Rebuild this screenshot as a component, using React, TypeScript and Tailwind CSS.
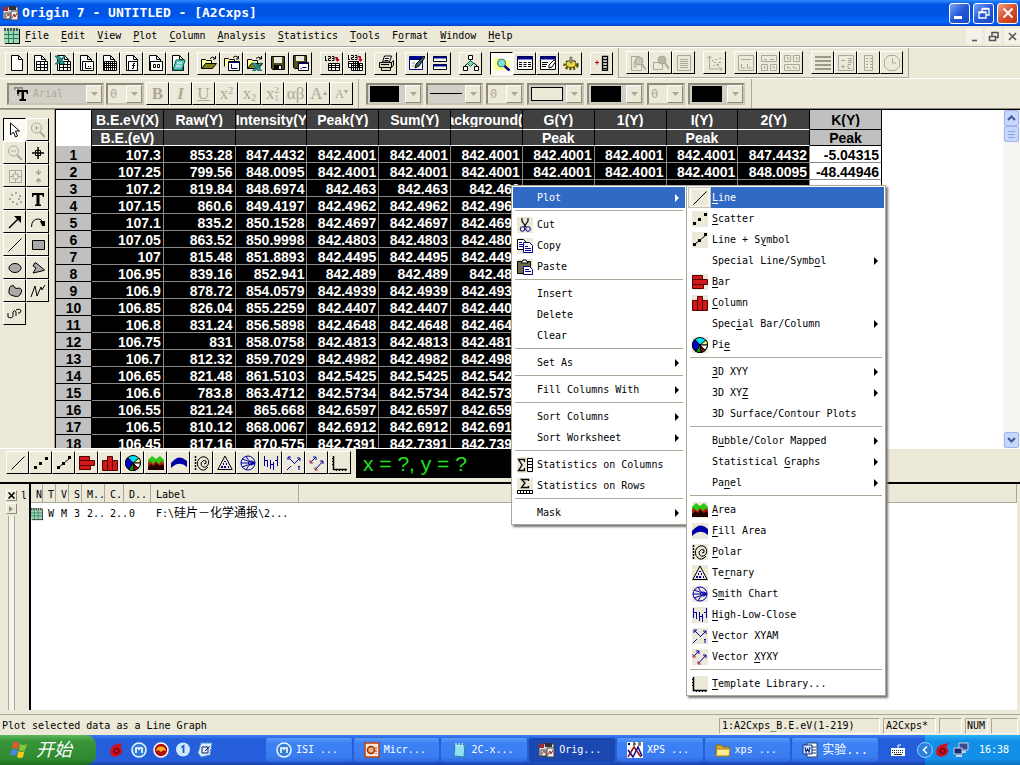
import type { ReactNode } from "react";

const page = <path d="M2.5 .5h7l4 4v11h-11zM9.5 .5v4h4" fill="#fff" stroke="#000" />;

const icons: Record<string, ReactNode> = {
  // file toolbar
  new: page,
  sheet: (
    <>
      {page}
      <path d="M4.5 6.5h11v9h-11z" fill="#fff" stroke="#000" />
      <path d="M4 9.5h12M4 12.5h12M8.5 6v10M12.5 6v10" stroke="#000" />
    </>
  ),
  excel: (
    <>
      {page}
      <path d="M4.5 6.5h11v9h-11z" fill="#fff" stroke="#000" />
      <path d="M4 9.5h12M4 12.5h12M8.5 6v10M12.5 6v10" stroke="#000" />
      <path d="M0 1h4l6 8H6zM9 1h2L3 9H0z" fill="#2a9c9c" stroke="#0f4f4f" strokeWidth=".6" />
    </>
  ),
  graph: (
    <>
      {page}
      <path d="M4.5 6.5h11v9h-11z" fill="#fff" stroke="#000" />
      <path d="M7.5 8v5.5h6M10 11.5h1M12 11.5h1" stroke="#000" fill="none" />
    </>
  ),
  matrix: (
    <>
      {page}
      <path d="M3.5 6.5h12v9h-12z" fill="#fff" stroke="#000" />
      <path d="M3 8.5h13M3 10.5h13M3 12.5h13M5.5 6v10M7.5 6v10M9.5 6v10M11.5 6v10M13.5 6v10" stroke="#000" />
    </>
  ),
  func: (
    <>
      {page}
      <path d="M4.5 6.5h9v9h-9z" fill="#fff" stroke="#000" />
      <path d="M11 8.5h-1.5v5H8M8 10.5h3" stroke="#000" fill="none" />
    </>
  ),
  layout: (
    <>
      {page}
      <path d="M3.5 6.5h12v9h-12zM6.5 9.5h2v3h-2zM10.5 9.5h2v3h-2z" fill="#fff" stroke="#000" />
    </>
  ),
  notes: (
    <>
      {page}
      <path d="M6 5h9l-3 10H3z" fill="#5fc4c4" stroke="#064" />
      <path d="M7 8h5M6 11h5" stroke="#fff" />
    </>
  ),
  open: (
    <>
      <path d="M.5 13.5v-9h4l1 1h5v3" fill="#ff9" stroke="#000" />
      <path d="M.5 13.5l4-5h11l-4 5z" fill="#807f20" stroke="#000" />
      <path d="M9 3.5q3-3 5 0M14.5 1v3H12" stroke="#000" fill="none" />
    </>
  ),
  openGraph: (
    <>
      <path d="M.5 11.5v-8h4l1 1h5v3" fill="#ff9" stroke="#000" />
      <path d="M9 2.5q3-3 5 0M14.5 1v3H12" stroke="#000" fill="none" />
      <path d="M4.5 6.5h11v9h-11z" fill="#fff" stroke="#000" />
      <path d="M5 7.5h10" stroke="#008" />
      <path d="M7.5 9v4.5h6" stroke="#008" fill="none" />
    </>
  ),
  openExcel: (
    <>
      <path d="M.5 13.5v-9h4l1 1h5v3" fill="#ff9" stroke="#000" />
      <path d="M.5 13.5l4-5h11l-4 5z" fill="#807f20" stroke="#000" />
      <path d="M9 3.5q3-3 5 0M14.5 1v3H12" stroke="#000" fill="none" />
      <path d="M5 8h4l6 8h-4zM13 8h2l-7 8H5z" fill="#2a9c9c" stroke="#0f4f4f" strokeWidth=".6" />
    </>
  ),
  save: (
    <>
      <path d="M1.5 1.5h13v13h-12l-1-1z" fill="#4d4d20" stroke="#000" />
      <path d="M4 2h8v6H4z" fill="#ece9d8" />
      <path d="M4 10h8v5H4z" fill="#000" />
      <path d="M9 11h2v3H9z" fill="#fff" />
    </>
  ),
  saveGraph: (
    <>
      <path d="M.5 .5h13v13h-12l-1-1z" fill="#4d4d20" stroke="#000" />
      <path d="M3 1h8v5H3z" fill="#ece9d8" />
      <path d="M5.5 7.5h10v8h-10z" fill="#fff" stroke="#000" />
      <path d="M6 8.5h9" stroke="#008" />
      <path d="M7.5 13.5h1l1-1h4" stroke="#008" fill="none" />
    </>
  ),
  import: (
    <>
      <path d="M1.5 1v4M1 5.5h2M4 1.5h2.5v2H4.5v2H7M8 1.5h2v4H8M8 3.5h2" stroke="#000" fill="none" />
      <path d="M11 2.500h2.500V6M12 4.500h3l-1.500 2z" stroke="#c00020" fill="#c00020" />
      <path d="M4.5 8.5h11v7h-11z" fill="#fff" stroke="#000" />
      <path d="M4 10.5h12M4 12.5h12M7.5 8v8M11.5 8v8" stroke="#000" />
    </>
  ),
  importAll: (
    <>
      <path d="M1.5 0v4M1 4.5h2M4 .5h2.5v2H4.5v2H7M8 .5h2v4H8M8 2.5h2" stroke="#000" fill="none" />
      <path d="M11 1.500h2.500V5M12 4.500h3l-1.500 2z" stroke="#c00020" fill="#c00020" />
      <path d="M1.5 6.5h10v6h-10zM4.5 8.5h11v7h-11z" fill="#fff" stroke="#000" />
      <path d="M1 8.5h14M4 10.5h12M4 12.5h12M6.5 6v10M8.5 6v10M10.5 6v10M12.5 8v8" stroke="#000" />
    </>
  ),
  print: (
    <>
      <path d="M4.5 7l2-6h7l-2 6z" fill="#fff" stroke="#000" />
      <path d="M1.5 7.5h12v5h-12zM13.5 7.5l2-2v5l-2 2zM3.5 12.5h9v3h-9z" fill="#ddd8b8" stroke="#000" />
      <path d="M7 3.5h4M6.5 5.5h4M3 9.5h8" stroke="#000" />
    </>
  ),
  refresh: (
    <>
      <path d="M.5 1.5h13v13H.5z" fill="#fff" stroke="#008" />
      <path d="M1 3.5h12" stroke="#008" strokeWidth="3" />
      <path d="M15 1L7 9l-1 4 4-2 6-9z" fill="#306c6c" stroke="#000" />
      <path d="M3 8h3M3 11h2" stroke="#888" />
    </>
  ),
  duplicate: (
    <>
      <path d="M1.5 1.5h13v5h-13zM1.5 9.5h13v5h-13z" fill="#fff" stroke="#000" />
      <path d="M1 2.5h14M1 10.5h14" stroke="#008" strokeWidth="2" />
    </>
  ),
  project: (
    <>
      <path d="M5.5 .5h4v4h-4z" fill="#fff" stroke="#000" />
      <path d="M7.5 5v2M2.5 12v-2l3-2M13.5 12v-2l-3-2" stroke="#000" fill="none" />
      <path d="M7.5 5.5l3 3-3 3-3-3z" fill="#7fd0c0" stroke="#064" />
      <path d="M.5 11.5h4v4h-4zM11.500 11.5h4v4h-4z" fill="#fff" stroke="#000" />
    </>
  ),
  explorer: (
    <>
      <path d="M0 3h6l2 2h8v10H0z" fill="#ffff90" />
      <circle cx="7.500" cy="8" r="4" fill="#7fe0d0" stroke="#3a7a70" />
      <path d="M10.500 11l5 4.500" stroke="#008" strokeWidth="2.500" />
    </>
  ),
  results: (
    <>
      <path d="M.5 1.5h15v13H.5z" fill="#fff" stroke="#000" />
      <path d="M0 3h16" stroke="#008" strokeWidth="3" />
      <path d="M2 7.5h12M2 9.5h12M2 11.5h12" stroke="#000" strokeDasharray="3 1.500" />
    </>
  ),
  script: (
    <>
      <path d="M.5 1.5h15v13H.5z" fill="#fff" stroke="#000" />
      <path d="M0 3h16" stroke="#008" strokeWidth="3" />
      <path d="M2 7.5h6M2 9.5h5M2 11.5h4" stroke="#000" />
      <path d="M14 5l-5 5v3l3-1 4-6z" fill="#fff" stroke="#000" />
    </>
  ),
  code: (
    <>
      <ellipse cx="8" cy="10" rx="6" ry="3.500" fill="#e8d850" stroke="#5a5000" strokeWidth="3.500" strokeDasharray="2 1.500" />
      <ellipse cx="8" cy="9" rx="5" ry="3.500" fill="#e8d850" stroke="#5a5000" />
      <path d="M7 2h2v6H7z" fill="#aaa" stroke="#444" strokeWidth=".6" />
    </>
  ),
  addColumn: (
    <>
      <path d="M1 7.5h4M3 5.500v4" stroke="#c00020" />
      <path d="M8.5 1.5h5v14h-5zM8 4.5h6M8 7.5h6M8 10.5h6M8 13.5h6" fill="#fff" stroke="#000" strokeWidth="1.300" />
    </>
  ),
  zoomPage: (
    <>
      <path d="M1.5 1.5h8l2 2v12h-10zM4 6v7M6 9v4" fill="none" stroke="#aca899" />
      <circle cx="9" cy="6" r="4" fill="#c8c5b4" stroke="#aca899" />
      <path d="M12 9l4 6" stroke="#aca899" strokeWidth="2" />
    </>
  ),
  zoomOut: (
    <>
      <path d="M.5 7.5h9v7h-9z" fill="none" stroke="#aca899" />
      <circle cx="9" cy="5" r="4" fill="#b8b5a4" stroke="#aca899" />
      <path d="M12 8l4 6" stroke="#aca899" strokeWidth="2" />
    </>
  ),
  wholePage: <path d="M1.5 .5h13v15h-13zM4 4.5h8M4 6.5h8M4 8.5h8M4 10.5h8M4 12.5h8" fill="none" stroke="#aca899" />,
  rescale: (
    <path
      d="M2.5 1v13H15M0 3.5L2.5 1 5 3.5M12.5 12l3 2.500-3 2M6 10.5h2M7 7.5h2M9 9.5h3M8 4.5h2M12 3.5h2M11 7.5h3M6 5v2M11 10v2"
      fill="none"
      stroke="#aca899"
    />
  ),
  layer1: <path d="M.5 .5h15v15H.5zM3 4.500h10M3.500 9v4H7M9.5 9v4H13" fill="none" stroke="#aca899" />,
  layer4: <path d="M.5 .5h15v6H.5zM.5 9.5h6v6h-6zM9.5 9.5h6v6h-6zM3 4.5h3M9 4.5h4M3.5 11v2H5M12.5 11v2H14" fill="none" stroke="#aca899" />,
  layers: <path d="M.5 .5h6v6h-6zM9.5 .5h6v6h-6zM.5 9.5h15v6H.5zM3.5 2v2H5M12.5 2v2H14M3.5 11v2H7M9.5 11v2H13" fill="none" stroke="#aca899" />,
  lines: <path d="M0 2h16M0 6h16M0 10h16M0 14h16" stroke="#9c998a" strokeWidth="2" />,
  legend: <path d="M.5 .5h15v15H.5zM3 5.5h4M3 11.5h4M5 9.5v4M10 3.5h3v4h-3M10 5.5h3M13 9.5h-3v4h3" fill="none" stroke="#aca899" />,
  scale: <path d="M3.5 .5h8v15h-8zM5 3.5h2M5 6.5h2M5 9.5h2M5 12.5h2M9 3.5h2M9 6.5h2M9 9.5h2M9 12.5h2" fill="none" stroke="#aca899" />,
  clock: <path d="M5 .5h6l4.500 4v7l-4.500 4H5l-4.500-4v-7zM8.500 3v5H12" fill="none" stroke="#aca899" />,

  // tools
  pointer: <path d="M3.5 1v12l3-3 2 5 2-1-2-5h4z" fill="#fff" stroke="#000" />,
  magnify: (
    <>
      <circle cx="6.500" cy="6" r="5" fill="none" stroke="#aca899" />
      <path d="M10 10l5 5" stroke="#aca899" strokeWidth="2" />
      <path d="M4 6h5M6.500 3.500v5" stroke="#aca899" />
    </>
  ),
  shrink: (
    <>
      <circle cx="6.500" cy="6" r="5" fill="none" stroke="#aca899" />
      <path d="M10 10l5 5" stroke="#aca899" strokeWidth="2" />
      <path d="M4 6h5" stroke="#aca899" />
    </>
  ),
  reader: (
    <>
      <path d="M8 2v12M2 8h12" stroke="#000" strokeWidth="1.500" />
      <path d="M5.500 5.500h5v5h-5z" fill="none" stroke="#000" />
    </>
  ),
  dataReader: <path d="M2.5 2.5h12v12h-12zM8.5 2v4M8.5 11v4M2 8.5h4M11 8.5h4M6 6h5v5H6z" fill="none" stroke="#aca899" />,
  selector: <path d="M8.5 1v3M6 4h5L8.500 7zM6 13h5L8.500 10zM8.500 13v2.500" fill="#aca899" stroke="#aca899" />,
  draw: <path d="M8 2h2M4 4h2M12 5h2M2 8h2M11 8h2M5 11h2M13 11h2M9 13h2" stroke="#aca899" strokeWidth="2" />,
  text: <path d="M2 2h12v4h-1l-1-2H9.500v9.500H11V15H5v-1.500h1.500V4H4L3 6H2z" fill="#000" />,
  arrow: (
    <>
      <path d="M2 14L12 4" stroke="#000" strokeWidth="1.500" />
      <path d="M7 2h7v7z" />
    </>
  ),
  curve: (
    <>
      <path d="M1.5 13q0-8 7-8 3 0 4 3" stroke="#000" fill="none" />
      <path d="M10 7h5v5h-3z" />
    </>
  ),
  line: <path d="M1.5 14.5l13-13" stroke="#000" fill="none" />,
  rect: <path d="M2.5 3.5h12v9h-12z" fill="#aaa" stroke="#000" />,
  ellipse: <ellipse cx="8" cy="8" rx="6" ry="4.500" fill="#aaa" stroke="#000" />,
  polygon: <path d="M5 2.500l3 2 6.500 5.500-2.500 1-9 2 3-5-3-2z" fill="#aaa" stroke="#000" />,
  region: <path d="M4 3q3-2 4 2 2 1 4 0 4 1 2 5-2 5-7 3-6-1-5-5 0-4 2-5z" fill="#aaa" stroke="#000" />,
  polyline: <path d="M1 14L5 3l2 10 4-9 1 3 3-5" fill="none" stroke="#000" />,
  freehand: <path d="M1 7v4q4 2 5-1V6q2-3 3 0v4M9 4q4-2 5 1-1 3-3 2" fill="none" stroke="#000" />,

  // plots
  scatter: <path d="M1 11h3v3H1zM6 7h3v3H6zM12 2h3v3h-3z" />,
  lineSymbol: (
    <>
      <path d="M2 13L14 3" stroke="#000" />
      <path d="M1 11h3v3H1zM6 7h3v3H6zM12 1h3v3h-3z" />
    </>
  ),
  bar: <path d="M.5 1.5h10v4H.5zM.5 5.5h15v5H.5zM.5 10.5h11v4H.5z" fill="#d01818" stroke="#500" />,
  column: <path d="M.5 5.5h5v10h-5zM5.5 1.5h5v14h-5zM10.5 5.5h5v10h-5z" fill="#d01818" stroke="#500" />,
  pie: (
    <>
      <circle cx="8" cy="8" r="7.500" fill="#00e0f0" stroke="#000" />
      <path d="M8 8L3 2.500A7.500 7.500 0 0 0 4 14.500z" fill="#00c" stroke="#000" />
      <path d="M8 8l6-5a7.500 7.500 0 0 1 1.500 5z" fill="#ff8" stroke="#000" />
      <path d="M8 8h7.500A7.500 7.500 0 0 1 13 13z" fill="#fff" stroke="#000" />
      <path d="M8 8l5 5.500a7.500 7.500 0 0 1-4 2z" fill="#a00000" stroke="#000" />
      <path d="M8 8l1 7.500a7.500 7.500 0 0 1-5-1z" fill="#0a0" stroke="#000" />
    </>
  ),
  area: (
    <>
      <path d="M0 5l4-4 4 3 4-3 4 4v10H0z" fill="#2dc814" />
      <path d="M0 8l2-2 3 3 3-3 3 3 3-3 2 2v7H0z" fill="#b02010" />
      <path d="M0 12l3-3 3 2 2-3 4 3 2-2 2 2v4H0z" fill="#200" />
    </>
  ),
  fillArea: <path d="M0 8Q8-2 16 6v6Q8 5 0 13z" fill="#0000a8" />,
  polar: (
    <>
      <path d="M1.5 1v14" stroke="#000" strokeDasharray="2 1" strokeWidth="1.500" />
      <path d="M14 12q-4 5-8 2-5-5-1-10 4-4 8-1 4 5-1 9-5 1-5-4 2-4 5-2 1 3-2 3" fill="none" stroke="#000" />
    </>
  ),
  ternary: (
    <>
      <path d="M8 1L.8 14.500h14.400z" fill="none" stroke="#000" />
      <path d="M7 6h2v1H7zM6 8h1v2H6zM9 8h1v2H9zM4 11h2v2H4zM7 11h2v2H7zM11 11h1v2h-1z" fill="#0000a8" />
    </>
  ),
  smith: (
    <>
      <circle cx="8" cy="8" r="7" fill="none" stroke="#0000a8" />
      <path d="M1 8h14M15 8Q9 8 6 1M15 8q-6 0-9 7M15 8Q7 6 2 4M15 8Q7 10 2 12" fill="none" stroke="#0000a8" />
      <path d="M15 8q-4-4-7 0 3 4 7 0" fill="none" stroke="#0000a8" />
    </>
  ),
  highLow: <path d="M1.5 1v10M1.5 5.5h3M4.5 5v7M7.5 5v9M7.5 9.5h3M10.5 7v8M14.500 1v10M14.500 5.5H12" fill="none" stroke="#0000a8" />,
  vectorAM: <path d="M2 2l6 6M2 5V2h3M13 11v4M12 12l1-1 1 1M8 9l6-6M14 6V3h-3M5 11l-4 4" fill="none" stroke="#0000a8" />,
  vectorXY: (
    <>
      <path d="M1 8l6-6M4 2h3v3M6 15l8-9M11 6h3v3" fill="none" stroke="#0000a8" />
      <path d="M1 5v3h3M6 12v3h3" fill="none" stroke="#c02040" />
    </>
  ),
  template: (
    <>
      <path d="M1.5 1v13.500H15" fill="none" stroke="#000" strokeWidth="1.500" />
      <path d="M0 3.5h1M0 6.5h1M0 9.5h1M4.5 15v1M7.5 15v1M10.5 15v1M13.5 15v1" stroke="#000" />
    </>
  ),

  // edit menu
  cut: (
    <>
      <path d="M5 1v3l4 6M11 1v3l-4 6" fill="none" stroke="#000" strokeWidth="1.200" />
      <circle cx="5.500" cy="12" r="2.300" fill="none" stroke="#008" />
      <circle cx="11" cy="12" r="2.300" fill="none" stroke="#008" />
    </>
  ),
  copy: (
    <>
      <path d="M.5 1.5h6l3 3v7h-9z" fill="#fff" stroke="#000" />
      <path d="M6.5 4.5h6l3 3v7h-9z" fill="#fff" stroke="#008" />
      <path d="M2 4.5h3M2 6.5h4M2 8.5h4M8 8.5h3M8 10.5h6M8 12.5h6" stroke="#008" />
    </>
  ),
  paste: (
    <>
      <path d="M.5 2.5h13v12H.5z" fill="#6e6c40" stroke="#000" />
      <path d="M4 4l2-3h3l2 3z" fill="#fff" stroke="#000" />
      <path d="M6.5 7.5h6l3 3v5h-9z" fill="#fff" stroke="#008" />
      <path d="M8 10.5h4M8 12.5h6" stroke="#008" />
    </>
  ),
  statColumns: (
    <>
      <path d="M7.5 5V2.5h-6L5 8l-3.500 5.500h6V11" fill="none" stroke="#000" strokeWidth="1.300" />
      <path d="M10.5 1.5h5v13h-5zM10 4.5h6M10 7.5h6M10 10.5h6" fill="#fff" stroke="#000" />
    </>
  ),
  statRows: (
    <>
      <path d="M11.5 3V1.5h-7L8 5 4.500 9.500h7V8" fill="none" stroke="#000" strokeWidth="1.300" />
      <path d="M.5 12.5h15v3H.5zM3.5 12v4M6.5 12v4M9.5 12v4M12.5 12v4" fill="#fff" stroke="#000" />
    </>
  ),

  // windows
  book: (
    <>
      <path d="M0 0h15v15H0z" fill="#9fd8b8" />
      <path d="M0 1.500h15" stroke="#555" strokeWidth="3" strokeDasharray="2 1" />
      <path d="M0 6.5h15M0 10.5h15M4.5 3v12M9.5 3v12" stroke="#2f7a5a" />
      <path d="M15.500 1v15M1 15.500h15" stroke="#000" />
    </>
  ),
  origin: (
    <>
      <path d="M0 2h15v12H0z" fill="#ddd" stroke="#444" />
      <path d="M0 2h5v4H0z" fill="#a03030" />
      <path d="M6 1h7v4H6z" fill="#333" />
      <path d="M2 8h5v6H2zM8 6h7v9H8z" fill="#eee" stroke="#444" />
      <path d="M3 12l2-3 1 2M9 13l2-4 1 3 2-4" fill="none" stroke="#a22" />
    </>
  ),
  ball: (
    <>
      <path d="M5 3l9-2-3 4q4 3 1 7-4 4-9 2-3-3-1-8z" fill="#d01020" />
      <circle cx="7.500" cy="9" r="2.500" fill="none" stroke="#400" />
    </>
  ),
  maxthon: (
    <>
      <circle cx="8" cy="8" r="7" fill="#2f7fd8" stroke="#e8f4ff" strokeWidth="1.600" />
      <path d="M5 11V6h6v5M8 6v2" fill="none" stroke="#fff" strokeWidth="1.600" />
    </>
  ),
  sunset: (
    <>
      <circle cx="8" cy="8" r="7" fill="#b01010" stroke="#fff" strokeWidth="1.500" />
      <path d="M3 9a5 4.500 0 0 1 10 0l-2.500-1L8 10 5.500 8z" fill="#ffb020" />
    </>
  ),
  info: (
    <>
      <circle cx="8" cy="7.500" r="7" fill="#cfe8fa" />
      <path d="M6.500 5.500L8.500 4v7" fill="none" stroke="#1c5fc0" strokeWidth="1.800" />
    </>
  ),
  desktop: (
    <>
      <path d="M4 1h11l-2 12-9 2-3-4z" fill="#d8f0ff" stroke="#4a90c8" />
      <path d="M5 5h6v6H5zM8 9l5-5" fill="none" stroke="#225" />
    </>
  ),
  ppt: (
    <>
      <path d="M1 1h14v14H1z" fill="#f8e8d8" stroke="#c04010" strokeWidth="1.500" />
      <circle cx="7" cy="8" r="3.500" fill="#f4b080" stroke="#a02800" strokeWidth="1.500" />
      <path d="M12 5v7" stroke="#a02800" strokeDasharray="2 1" />
    </>
  ),
  notepad: (
    <>
      <path d="M4 2l10 1-1 12-10-1z" fill="#8fe0f0" stroke="#2a8098" />
      <path d="M5 1v3M8 1v3M11 1v3" stroke="#e8ffff" />
    </>
  ),
  xps: (
    <>
      <path d="M0 0h16v16H0z" fill="#fff" />
      <path d="M1 1l2 2M3 1L1 3M6 1h2v2H6M11 1h3M11 3h3" stroke="#000" fill="none" />
      <path d="M1 15L7 5l7 10" fill="none" stroke="#a01010" strokeWidth="1.500" />
      <path d="M1 8l5 7 5-10 4 9" fill="none" stroke="#101090" strokeWidth="1.500" />
    </>
  ),
  folder: (
    <>
      <path d="M1 3h5l2 2h6v9H1z" fill="#d8a830" stroke="#8a6a10" />
      <path d="M2 7h13l-1 7H1z" fill="#ffec90" stroke="#a88420" />
    </>
  ),
  word: (
    <>
      <path d="M5 1h10v14H5z" fill="#fff" stroke="#246" />
      <path d="M10 5h4M10 8h4M10 11h4" stroke="#246" />
      <path d="M1 3h9v9H1z" fill="#dfe8ff" stroke="#103080" />
      <path d="M3 5l1 5 1.500-3L7 10l1-5" fill="none" stroke="#103080" strokeWidth="1.200" />
    </>
  ),
  keyboard: (
    <>
      <path d="M1 6h14v8H1z" fill="#fff" />
      <path d="M2 8.5h12M2 10.5h12" stroke="#222" strokeDasharray="1 1" />
      <path d="M8 6V3h3" stroke="#fff" fill="none" />
      <path d="M4 12.5h8" stroke="#222" />
    </>
  ),
  network: (
    <>
      <path d="M6 1h9v7H6z" fill="#3a4a90" stroke="#c8d0e8" />
      <path d="M1 6h8v6H1z" fill="#1a2a70" stroke="#c8d0e8" />
      <path d="M3 14h6M9 10h4" stroke="#c8d0e8" strokeWidth="2" />
    </>
  ),
};

function Icon({ name, className = "size-4" }: { name: string; className?: string }) {
  return (
    <svg viewBox="0 0 16 16" className={`shrink-0 ${className}`} aria-hidden="true">
      {icons[name]}
    </svg>
  );
}

// "&" marks the letter that is underlined
function Mnemonic({ text }: { text: string }) {
  const at = text.indexOf("&");
  if (at < 0) return <>{text}</>;
  return (
    <>
      {text.slice(0, at)}
      <u className="underline-offset-2">{text[at + 1]}</u>
      {text.slice(at + 2)}
    </>
  );
}

function ToolButton({ name, pressed, children }: { name: string; pressed?: boolean; children?: ReactNode }) {
  return (
    <button
      type="button"
      aria-label={name}
      className={
        pressed
          ? "flex size-[23px] items-center justify-center border border-t-black border-l-black border-r-white border-b-white bg-[#fbfaf4]"
          : "flex size-[23px] items-center justify-center border border-t-white border-l-white border-r-black border-b-black bg-[#ece9d8]"
      }
    >
      {children ?? <Icon name={name} />}
    </button>
  );
}

function Group({ names, pressed }: { names: string[]; pressed?: string }) {
  return (
    <div className="flex">
      {names.map((name) => (
        <ToolButton key={name} name={name} pressed={name === pressed} />
      ))}
    </div>
  );
}

function DropArrow() {
  return (
    <span className="flex w-4 shrink-0 items-center justify-center border border-t-white border-l-white border-r-[#8d8a7c] border-b-[#8d8a7c] bg-[#ece9d8]">
      <svg viewBox="0 0 7 4" className="h-1 w-[7px]" aria-hidden="true">
        <path d="M0 0h7L3.500 4z" fill="#aca899" />
      </svg>
    </span>
  );
}

const comboFrame =
  "relative flex h-[22px] border-2 border-t-[#8d8a7c] border-l-[#8d8a7c] border-r-[#c9c6b6] border-b-[#c9c6b6]";

function NumberCombo({ label }: { label: string }) {
  return (
    <div className={`${comboFrame} w-[38px] bg-[#ece9d8]`}>
      <select
        aria-label={label}
        disabled
        className="w-full min-w-0 appearance-none pl-0.5 font-['DejaVu_Sans_Mono',monospace] text-[12px] text-[#aca899] opacity-100"
      >
        <option>0</option>
      </select>
      <DropArrow />
    </div>
  );
}

function SwatchCombo({ label, children }: { label: string; children: ReactNode }) {
  return (
    <div className={`${comboFrame} w-[57px] bg-[#d2d0c6]`}>
      <span className="flex flex-1 items-center pl-0.5">{children}</span>
      <DropArrow />
      <select aria-label={label} className="absolute inset-0 w-full appearance-none opacity-0">
        <option>Default</option>
      </select>
    </div>
  );
}

const menus = ["&File", "&Edit", "&View", "&Plot", "&Column", "&Analysis", "&Statistics", "&Tools", "F&ormat", "&Window", "&Help"];

const columns = [
  ["B.E.eV(X)", "B.E.(eV)"],
  ["Raw(Y)", ""],
  ["Intensity(Y)", ""],
  ["Peak(Y)", ""],
  ["Sum(Y)", ""],
  ["Background(Y)", ""],
  ["G(Y)", "Peak"],
  ["1(Y)", ""],
  ["I(Y)", "Peak"],
  ["2(Y)", ""],
  ["K(Y)", "Peak"],
];

// energy, raw, intensity, then the fitted curves
const data = [
  ["107.3", "853.28", "847.4432", "842.4001", "842.4001", "842.4001", "842.4001", "842.4001", "842.4001", "847.4432", "-5.04315"],
  ["107.25", "799.56", "848.0095", "842.4001", "842.4001", "842.4001", "842.4001", "842.4001", "842.4001", "848.0095", "-48.44946"],
  ["107.2", "819.84", "848.6974", "842.463", "842.463", "842.463"],
  ["107.15", "860.6", "849.4197", "842.4962", "842.4962", "842.4962"],
  ["107.1", "835.2", "850.1528", "842.4697", "842.4697", "842.4697"],
  ["107.05", "863.52", "850.9998", "842.4803", "842.4803", "842.4803"],
  ["107", "815.48", "851.8893", "842.4495", "842.4495", "842.4495"],
  ["106.95", "839.16", "852.941", "842.489", "842.489", "842.489"],
  ["106.9", "878.72", "854.0579", "842.4939", "842.4939", "842.4939"],
  ["106.85", "826.04", "855.2259", "842.4407", "842.4407", "842.4407"],
  ["106.8", "831.24", "856.5898", "842.4648", "842.4648", "842.4648"],
  ["106.75", "831", "858.0758", "842.4813", "842.4813", "842.4813"],
  ["106.7", "812.32", "859.7029", "842.4982", "842.4982", "842.4982"],
  ["106.65", "821.48", "861.5103", "842.5425", "842.5425", "842.5425"],
  ["106.6", "783.8", "863.4712", "842.5734", "842.5734", "842.5734"],
  ["106.55", "821.24", "865.668", "842.6597", "842.6597", "842.6597"],
  ["106.5", "810.12", "868.0067", "842.6912", "842.6912", "842.6912"],
  ["106.45", "817.16", "870.575", "842.7391", "842.7391", "842.7391"],
];

function Worksheet() {
  return (
    <table className="w-[826px] table-fixed border-separate border-spacing-0 font-['Liberation_Sans',sans-serif] text-[14px] leading-[14px] font-bold">
      <colgroup>
        <col className="w-9" />
        {columns.map(([name]) => (
          <col key={name} />
        ))}
      </colgroup>
      <thead>
        {[0, 1].map((line) => (
          <tr key={line} className={line === 0 ? "h-5" : "h-4"}>
            <td className="border-r border-black bg-white p-0" />
            {columns.map((column, i) => (
              <th
                key={column[0]}
                className={
                  i === 10
                    ? "border-r border-b border-black bg-[#c0c0c0] p-0 font-normal text-black"
                    : "border-r border-b border-r-black border-b-white bg-[#404040] p-0 font-normal text-white"
                }
              >
                <span
                  className={`flex h-[15px] items-end overflow-hidden font-bold ${i === 2 ? "justify-start" : "justify-center"}`}
                >
                  {column[line]}
                </span>
              </th>
            ))}
          </tr>
        ))}
      </thead>
      <tbody>
        {data.map((row, i) => (
          <tr key={row[0]} className="h-[17px]">
            <th className="border-r border-b border-black bg-[#c0c0c0] p-0 pt-0.5">{i + 1}</th>
            {columns.map(([name], c) => (
              <td
                key={name}
                className={
                  c === 10
                    ? "border-r border-b border-r-black border-b-[#8a8a8a] bg-white p-0 pt-0.5 pr-0.5 text-right"
                    : "overflow-hidden border-r border-b border-[#8a8a8a] bg-black p-0 pt-0.5 pr-0.5 text-right text-white"
                }
              >
                {row[c]}
              </td>
            ))}
          </tr>
        ))}
      </tbody>
    </table>
  );
}

type Item = { label: string; icon?: string; sub?: boolean; active?: boolean } | null;

const contextItems: Item[] = [
  { label: "Plot", sub: true, active: true },
  null,
  { label: "Cut", icon: "cut" },
  { label: "Copy", icon: "copy" },
  { label: "Paste", icon: "paste" },
  null,
  { label: "Insert" },
  { label: "Delete" },
  { label: "Clear" },
  null,
  { label: "Set As", sub: true },
  null,
  { label: "Fill Columns With", sub: true },
  null,
  { label: "Sort Columns", sub: true },
  { label: "Sort Worksheet", sub: true },
  null,
  { label: "Statistics on Columns", icon: "statColumns" },
  { label: "Statistics on Rows", icon: "statRows" },
  null,
  { label: "Mask", sub: true },
];

const plotItems: Item[] = [
  { label: "&Line", icon: "line", active: true },
  { label: "&Scatter", icon: "scatter" },
  { label: "Line + S&ymbol", icon: "lineSymbol" },
  { label: "Special Line/Symb&ol", sub: true },
  { label: "&Bar", icon: "bar" },
  { label: "&Column", icon: "column" },
  { label: "Spec&ial Bar/Column", sub: true },
  { label: "Pi&e", icon: "pie" },
  null,
  { label: "&3D XYY", sub: true },
  { label: "3D XY&Z", sub: true },
  { label: "3D Surface/Contour Plots" },
  null,
  { label: "B&ubble/Color Mapped", sub: true },
  { label: "Statistical &Graphs", sub: true },
  { label: "Pa&nel", sub: true },
  null,
  { label: "&Area", icon: "area" },
  { label: "&Fill Area", icon: "fillArea" },
  { label: "&Polar", icon: "polar" },
  { label: "Te&rnary", icon: "ternary" },
  { label: "S&mith Chart", icon: "smith" },
  { label: "&High-Low-Close", icon: "highLow" },
  { label: "&Vector XYAM", icon: "vectorAM" },
  { label: "Vector &XYXY", icon: "vectorXY" },
  null,
  { label: "&Template Library...", icon: "template" },
];

function PopupMenu({ items, className }: { items: Item[]; className: string }) {
  return (
    <div role="menu" className={`absolute border border-[#aca899] bg-white p-px shadow-[2px_2px_2px_#777] ${className}`}>
      {items.map((item, i) =>
        item ? (
          <button
            key={item.label}
            type="button"
            role="menuitem"
            className={`flex h-[21px] w-full items-center text-left ${item.active ? "text-white" : "text-black"}`}
          >
            <span
              className={`flex h-full w-[23px] shrink-0 items-center justify-center ${
                item.active ? (item.icon ? "border border-[#c5c2b0] bg-[#f6f4ec]" : "bg-[#316ac5]") : ""
              }`}
            >
              {item.icon && <Icon name={item.icon} className="size-4 bg-[#ece9d8]" />}
            </span>
            <span className={`flex h-full flex-1 items-center pr-1.5 pl-px ${item.active ? "bg-[#316ac5]" : ""}`}>
              <span className="flex-1 whitespace-pre">
                <Mnemonic text={item.label} />
              </span>
              {item.sub && (
                <svg viewBox="0 0 4 8" className="h-2 w-1" aria-hidden="true">
                  <path d="M0 0l4 4-4 4z" fill="currentColor" />
                </svg>
              )}
            </span>
          </button>
        ) : (
          <div key={i} role="separator" className="mx-0.5 mt-0.5 mb-[3px] h-px bg-[#aca899]" />
        ),
      )}
    </div>
  );
}

const plotBar = [
  "line",
  "scatter",
  "lineSymbol",
  "bar",
  "column",
  "pie",
  "area",
  "fillArea",
  "polar",
  "ternary",
  "smith",
  "highLow",
  "vectorAM",
  "vectorXY",
  "template",
];

const tools = [
  "pointer",
  "magnify",
  "shrink",
  "reader",
  "dataReader",
  "selector",
  "draw",
  "text",
  "arrow",
  "curve",
  "line",
  "rect",
  "ellipse",
  "polygon",
  "region",
  "polyline",
  "freehand",
];

const tasks = [
  ["maxthon", "ISI ..."],
  ["ppt", "Micr..."],
  ["notepad", "2C-x..."],
  ["origin", "Orig..."],
  ["xps", "XPS ..."],
  ["folder", "xps ..."],
  ["word", "实验..."],
];

const scrollButton =
  "flex h-4 w-[15px] items-center justify-center rounded-[2px] border border-[#9db5f0] bg-[#c6d6fc] text-[#3b5890]";

export default function App() {
  return (
    <div className="relative flex h-screen w-full flex-col overflow-hidden bg-[#ece9d8] font-['DejaVu_Sans_Mono','Noto_Sans_CJK_SC',monospace] text-[10px] leading-3 text-black">
      <header className="flex h-[26px] shrink-0 items-center gap-[3px] bg-[linear-gradient(#2f8bff,#0054e3_18%,#0055e5_60%,#0066ff_85%,#003fc4)] pr-0.5 pl-[3px]">
        <Icon name="origin" />
        <h1 className="flex-1 text-[13px] font-bold whitespace-pre text-white">Origin 7 - UNTITLED - [A2Cxps]</h1>
        <button
          type="button"
          aria-label="Minimize"
          className="flex size-[21px] items-end rounded-[3px] border border-white bg-[linear-gradient(135deg,#7fa4f5,#2457d8_50%,#1a48c0)] p-1"
        >
          <span className="h-[3px] w-2 bg-white" />
        </button>
        <button
          type="button"
          aria-label="Restore"
          className="flex size-[21px] items-center justify-center rounded-[3px] border border-white bg-[linear-gradient(135deg,#7fa4f5,#2457d8_50%,#1a48c0)]"
        >
          <svg viewBox="0 0 12 12" className="size-3" aria-hidden="true">
            <path d="M1 5h7v6H1zM4 5V2h7v6H8M1 5.500h7M4 1.500h7" fill="none" stroke="#fff" strokeWidth="1.300" />
          </svg>
        </button>
        <button
          type="button"
          aria-label="Close"
          className="flex size-[21px] items-center justify-center rounded-[3px] border border-white bg-[linear-gradient(135deg,#f0a088,#d8502c_50%,#b83410)]"
        >
          <svg viewBox="0 0 12 12" className="size-3" aria-hidden="true">
            <path d="M1.5 1.5l9 9M10.5 1.5l-9 9" stroke="#fff" strokeWidth="2" />
          </svg>
        </button>
      </header>

      <nav className="flex h-[21px] shrink-0 items-center gap-3 border-b border-[#aca899] pl-1">
        <span className="-mr-[7px] flex">
          <Icon name="book" />
        </span>
        {menus.map((menu) => (
          <button key={menu} type="button">
            <Mnemonic text={menu} />
          </button>
        ))}
        <div className="ml-auto flex gap-[3px] text-[#555]">
          {[
            ["Minimize sheet", "M3 9.5h5"],
            ["Restore sheet", "M1.5 5.5h6v4h-6zM4 4.5v-3h6v5H8"],
            ["Close sheet", "M2 2l7 7M9 2l-7 7"],
          ].map(([label, d]) => (
            <button key={label} type="button" aria-label={label} className="flex size-4 items-center justify-center bg-[#f3f1e8]">
              <svg viewBox="0 0 11 11" className="size-[11px]" aria-hidden="true">
                <path d={d} fill="none" stroke="currentColor" strokeWidth="1.600" />
              </svg>
            </button>
          ))}
        </div>
      </nav>

      <div className="flex h-[31px] shrink-0 border-t border-white">
        <div className="flex items-center gap-2 border-r border-[#aca899] pr-[5px] pl-[5px]">
          <Group names={["new", "sheet", "excel", "graph", "matrix", "func", "layout", "notes"]} />
          <Group names={["open", "openGraph", "openExcel", "save", "saveGraph"]} />
          <Group names={["import", "importAll"]} />
          <Group names={["print"]} />
          <Group names={["refresh", "duplicate"]} />
          <Group names={["project"]} />
          <Group names={["explorer", "results", "script", "code"]} pressed="explorer" />
          <Group names={["addColumn"]} />
        </div>
        <div className="flex items-center gap-2 border-r border-b border-[#aca899] pr-[5px] pl-[7px]">
          <Group names={["zoomPage", "zoomOut", "wholePage"]} />
          <Group names={["rescale"]} />
          <Group names={["layer1", "layer4", "layers"]} />
          <Group names={["lines", "legend", "scale", "clock"]} />
        </div>
      </div>

      <div className="flex h-[30px] shrink-0 border-t border-white font-['Liberation_Serif',serif] text-[#aca899]">
        <div className="flex items-center gap-0.5 border-r border-[#aca899] pr-[5px] pl-[7px]">
          <div className={`${comboFrame} w-[97px] bg-[#d2d0c6]`}>
            <svg viewBox="0 0 16 16" className="mx-1 size-4 self-center" aria-hidden="true">
              <path d="M1 1h9v3H9L8 2.500H6.500V10H4V2.500H3L2 4H1z" fill="#8d8a7c" />
              <path d="M4 4h11v4h-1l-1-2h-2v7h2v2H6.500v-2h2V6H6.500l-1 2H4z" fill="#000" />
            </svg>
            <select
              aria-label="Font"
              disabled
              className="w-full min-w-0 flex-1 appearance-none font-['DejaVu_Sans_Mono',monospace] text-[10px] text-[#aca899] opacity-100"
            >
              <option>Arial</option>
            </select>
            <DropArrow />
          </div>
          <NumberCombo label="Font size" />
          <div className="flex text-[17px] leading-5">
            <ToolButton name="Bold">
              <b>B</b>
            </ToolButton>
            <ToolButton name="Italic">
              <b className="italic">I</b>
            </ToolButton>
            <ToolButton name="Underline">
              <u>U</u>
            </ToolButton>
            <ToolButton name="Superscript">
              <span>
                x<sup className="text-[10px]">2</sup>
              </span>
            </ToolButton>
            <ToolButton name="Subscript">
              <span>
                x<sub className="text-[10px]">2</sub>
              </span>
            </ToolButton>
            <ToolButton name="Super and subscript">
              <span className="flex items-center">
                x
                <span className="flex flex-col text-[9px] leading-2">
                  <span>2</span>
                  <span>1</span>
                </span>
              </span>
            </ToolButton>
            <ToolButton name="Greek">αβ</ToolButton>
            <ToolButton name="Increase font">
              <span>
                A<sup className="text-[8px]">▴</sup>
              </span>
            </ToolButton>
            <ToolButton name="Decrease font">
              <span className="text-[13px]">
                A<sup className="text-[8px]">▾</sup>
              </span>
            </ToolButton>
          </div>
        </div>
        <div className="flex items-center gap-[3px] border-r border-[#aca899] pr-1.5 pl-[7px]">
          <SwatchCombo label="Line color">
            <span className="h-4 w-[29px] bg-black" />
          </SwatchCombo>
          <SwatchCombo label="Line style">
            <span className="h-px w-8 bg-black" />
          </SwatchCombo>
          <NumberCombo label="Line width" />
          <SwatchCombo label="Fill color">
            <span className="h-[14px] w-8 border border-black bg-[#ece9d8]" />
          </SwatchCombo>
          <SwatchCombo label="Pattern color">
            <span className="h-4 w-[30px] bg-black" />
          </SwatchCombo>
          <NumberCombo label="Pattern" />
          <SwatchCombo label="Pattern background">
            <span className="h-4 w-[30px] bg-black" />
          </SwatchCombo>
        </div>
      </div>

      <main className="flex h-[340px] shrink-0 border-t border-[#8d8a7c]">
        <aside className="w-[55px] shrink-0 border-t border-r border-[#aca899] pt-2 pl-[3px]">
          <div className="grid w-[46px] grid-cols-2">
            {tools.map((tool) => (
              <ToolButton key={tool} name={tool} pressed={tool === "pointer"} />
            ))}
          </div>
        </aside>
        <section className="flex min-w-0 flex-1 overflow-hidden border-t border-l border-black bg-white">
          <div className="flex-1 overflow-hidden">
            <Worksheet />
          </div>
          <div className="flex w-[17px] shrink-0 flex-col items-center bg-[#f6f5f1]">
            <button type="button" aria-label="Scroll up" className={scrollButton}>
              <svg viewBox="0 0 9 6" className="h-1.5 w-[9px]" aria-hidden="true">
                <path d="M1 5l3.500-3.500L8 5" fill="none" stroke="currentColor" strokeWidth="2" />
              </svg>
            </button>
            <span className={scrollButton}>
              <span className="h-[7px] w-[7px] border-y border-[#8ba4e0] bg-[linear-gradient(#c6d6fc_40%,#8ba4e0_40%,#8ba4e0_60%,#c6d6fc_60%)]" />
            </span>
            <button type="button" aria-label="Scroll down" className={`${scrollButton} mt-auto`}>
              <svg viewBox="0 0 9 6" className="h-1.5 w-[9px]" aria-hidden="true">
                <path d="M1 1l3.500 3.500L8 1" fill="none" stroke="currentColor" strokeWidth="2" />
              </svg>
            </button>
          </div>
        </section>
      </main>

      <div className="flex h-[34px] shrink-0 items-start gap-[5px] border-t border-white pl-1.5">
        <div className="pt-0.5">
          <Group names={plotBar} />
        </div>
        <output className="flex h-[29px] w-60 items-center bg-black pl-[7px] font-['Liberation_Sans',sans-serif] text-[21px] text-[#20e020]">
          x = ?, y = ?
        </output>
      </div>

      <section className="flex min-h-0 flex-1 border-t-2 border-black pb-1">
        <div className="flex w-[29px] shrink-0 gap-1 pt-1.5 pl-[5px]">
          <div className="flex w-3 flex-col items-center gap-0.5">
            <button
              type="button"
              aria-label="Close explorer"
              className="flex size-[11px] items-center justify-center border border-t-white border-l-white border-r-[#8d8a7c] border-b-[#8d8a7c]"
            >
              <svg viewBox="0 0 7 7" className="size-[7px]" aria-hidden="true">
                <path d="M.5 .5l6 6M6.5 .5l-6 6" stroke="#000" strokeWidth="1.500" />
              </svg>
            </button>
            <button
              type="button"
              aria-label="Expand"
              className="flex size-[11px] items-center justify-center border border-t-white border-l-white border-r-[#8d8a7c] border-b-[#8d8a7c]"
            >
              <svg viewBox="0 0 4 6" className="h-1.5 w-1" aria-hidden="true">
                <path d="M0 0l4 3-4 3z" fill="#8d8a7c" />
              </svg>
            </button>
            <div className="w-[7px] flex-1 border-x border-x-[#aca899] bg-[#f6f4ec]" />
          </div>
          <span>l</span>
        </div>
        <div className="flex-1 border-l-2 border-black bg-white">
          <table className="w-full table-fixed border-separate border-spacing-0 whitespace-nowrap">
            <colgroup>
              <col className="w-3" />
              <col className="w-[13px]" />
              <col className="w-[13px]" />
              <col className="w-[13px]" />
              <col className="w-[23px]" />
              <col className="w-[19px]" />
              <col className="w-[27px]" />
              <col className="w-[148px]" />
              <col />
            </colgroup>
            <thead>
              <tr className="h-[19px]">
                {["N", "T", "V", "S", "M..", "C.", "D..", "Label", ""].map((name, i) => (
                  <th
                    key={i}
                    className="overflow-hidden border-r border-b border-[#aca899] bg-[#ece9d8] p-0 pt-1 pl-[5px] text-left font-normal"
                  >
                    {name}
                  </th>
                ))}
              </tr>
            </thead>
            <tbody>
              <tr className="h-[21px]">
                <td className="p-0">
                  <Icon name="book" className="h-4 w-3" />
                </td>
                {["W", "M", "3", "2..", "2..", "0"].map((value, i) => (
                  <td key={i} className="p-0 pl-[5px]">
                    {value}
                  </td>
                ))}
                <td className="p-0 pl-[5px]">
                  F:\<span className="text-[12px]">硅片－化学通报</span>\2...
                </td>
                <td />
              </tr>
            </tbody>
          </table>
        </div>
        <div className="w-[3px]" />
      </section>

      <div className="flex h-[21px] shrink-0 items-center gap-[3px] border-t border-[#aca899] pt-0.5 pr-0.5 pl-0.5">
        <p className="flex-1">Plot selected data as a Line Graph</p>
        <span className="h-4 w-[161px] border border-r-white border-b-white border-t-[#aca899] border-l-[#aca899] pt-px pl-0.5">1:A2Cxps_B.E.eV(1-219)</span>
        <span className="h-4 w-[53px] border border-r-white border-b-white border-t-[#aca899] border-l-[#aca899] pt-px pl-0.5">A2Cxps*</span>
        <span className="h-4 w-[23px] border border-r-white border-b-white border-t-[#aca899] border-l-[#aca899]" />
        <span className="h-4 w-[23px] border border-r-white border-b-white border-t-[#aca899] border-l-[#aca899] pt-px pl-px">NUM</span>
        <span className="h-4 w-[27px] border border-r-white border-b-white border-t-[#aca899] border-l-[#aca899]" />
      </div>

      <footer className="flex h-[30px] shrink-0 bg-[linear-gradient(#3a80f0,#245edb_15%,#245edb_85%,#1941a5)] text-[12px] text-white">
        <button
          type="button"
          className="flex w-24 items-center gap-1.5 rounded-r-[10px] bg-[linear-gradient(#5cb85c,#3a963a_20%,#2f8a2f_80%,#1f6a1f)] pl-2.5 text-[18px] italic"
        >
          <svg viewBox="0 0 20 18" className="h-[18px] w-5" aria-hidden="true">
            <path d="M3 2q3-2 6 0L8 8q-3-2-6 0z" fill="#e8562a" />
            <path d="M10 3q3 2 7 0l-2 6q-3 2-6 0z" fill="#8ac43f" />
            <path d="M1.500 9q3-2 6 0l-1.500 6q-3-2-6 0z" fill="#4a86e8" />
            <path d="M8.500 10q3 2 6 0L13 16q-3 2-6 0z" fill="#f8c820" />
          </svg>
          开始
        </button>
        <div className="flex w-[170px] items-center gap-1.5 pl-[13px]">
          {["ball", "maxthon", "sunset", "info", "desktop"].map((name) => (
            <button key={name} type="button" aria-label={name}>
              <Icon name={name} />
            </button>
          ))}
        </div>
        <div className="flex flex-1 items-center gap-0.5">
          {tasks.map(([icon, title]) => (
            <button
              key={title}
              type="button"
              className={`flex h-6 flex-1 items-center gap-1 rounded-[2px] pl-2.5 whitespace-pre ${
                icon === "origin" ? "bg-[#1a48b0]" : "bg-[linear-gradient(#5a9af8,#3c81f3_20%,#3a7cf0_80%,#2c66d8)]"
              }`}
            >
              <Icon name={icon} />
              <span className={icon === "word" ? "text-[12px]" : "text-[10px]"}>{title}</span>
            </button>
          ))}
        </div>
        <div className="flex w-[47px] items-center justify-center pr-2">
          <Icon name="keyboard" />
        </div>
        <div className="flex w-[95px] items-center gap-0.5 bg-[linear-gradient(#2cb0f8,#1290e8_20%,#1290e8_80%,#0c70c0)]">
          <button
            type="button"
            aria-label="Show hidden icons"
            className="-ml-2 flex size-4 items-center justify-center rounded-full border border-[#8fd0ff] bg-[#2a80e0]"
          >
            <svg viewBox="0 0 6 8" className="h-2 w-1.5" aria-hidden="true">
              <path d="M5 .5L1.500 4 5 7.500" fill="none" stroke="#fff" strokeWidth="1.600" />
            </svg>
          </button>
          <Icon name="ball" />
          <Icon name="network" />
          <time className="ml-2 text-[10px]">16:38</time>
        </div>
      </footer>

      <PopupMenu items={contextItems} className="top-[185px] left-[511px] w-[176px]" />
      <PopupMenu items={plotItems} className="top-[185px] left-[686px] w-[200px]" />
    </div>
  );
}
